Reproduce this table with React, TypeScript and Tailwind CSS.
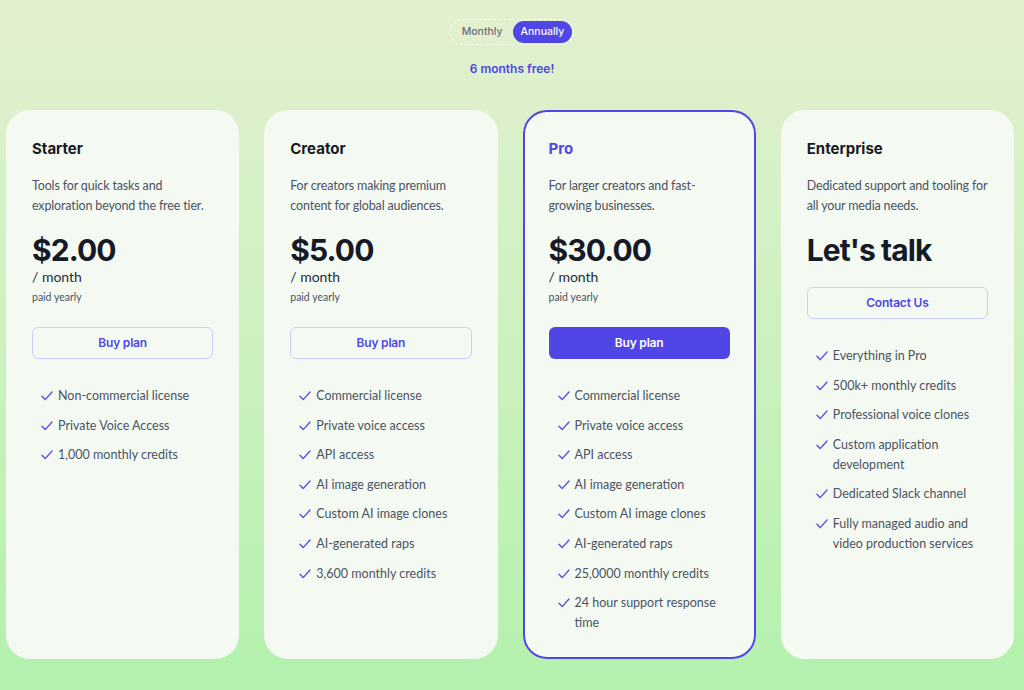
import { useState } from "react";

type Plan = {
  name: string;
  blurb: string;
  price?: string;
  cta: string;
  highlight?: boolean;
  features: string[];
};

const plans: Plan[] = [
  {
    name: "Starter",
    blurb: "Tools for quick tasks and exploration beyond the free tier.",
    price: "$2.00",
    cta: "Buy plan",
    features: ["Non-commercial license", "Private Voice Access", "1,000 monthly credits"],
  },
  {
    name: "Creator",
    blurb: "For creators making premium content for global audiences.",
    price: "$5.00",
    cta: "Buy plan",
    features: [
      "Commercial license",
      "Private voice access",
      "API access",
      "AI image generation",
      "Custom AI image clones",
      "AI-generated raps",
      "3,600 monthly credits",
    ],
  },
  {
    name: "Pro",
    blurb: "For larger creators and fast-growing businesses.",
    price: "$30.00",
    cta: "Buy plan",
    highlight: true,
    features: [
      "Commercial license",
      "Private voice access",
      "API access",
      "AI image generation",
      "Custom AI image clones",
      "AI-generated raps",
      "25,0000 monthly credits",
      "24 hour support response time",
    ],
  },
  {
    name: "Enterprise",
    blurb: "Dedicated support and tooling for all your media needs.",
    cta: "Contact Us",
    features: [
      "Everything in Pro",
      "500k+ monthly credits",
      "Professional voice clones",
      "Custom application development",
      "Dedicated Slack channel",
      "Fully managed audio and video production services",
    ],
  },
];

const heading = { fontFamily: "Inter, 'Noto Sans', sans-serif" };

function CheckMark() {
  return (
    <svg width="12" height="10" viewBox="0 0 12 10" fill="none" className="shrink-0 mt-[5px]">
      <path d="M1 5.2 4.2 8.6 11 1" stroke="#5b4fe6" strokeWidth="1.4" strokeLinecap="round" strokeLinejoin="round" />
    </svg>
  );
}

function PlanCard({ plan }: { plan: Plan }) {
  const outline = "border border-[#c9cffa] text-[#4f46e5] bg-transparent";
  return (
    <div
      className={`rounded-[24px] bg-[#f4faf2] px-[26px] pt-[29px] pb-[26px] ${
        plan.highlight ? "ring-2 ring-inset ring-[#5046e5]" : ""
      }`}
    >
      <h3
        style={heading}
        className={`text-[15px] leading-[20px] font-bold ${
          plan.highlight ? "text-[#4f46e5]" : "text-[#161a26]"
        }`}
      >
        {plan.name}
      </h3>
      <p className="mt-[17px] text-[12.5px] leading-[20px] tracking-[-0.15px] text-[#4b5262]">
        {plan.blurb}
      </p>

      <div
        style={heading}
        className="mt-[17px] text-[30px] leading-[34px] font-bold tracking-[-0.9px] text-[#161a26]"
      >
        {plan.price ?? "Let's talk"}
      </div>

      {plan.price ? (
        <>
          <div className="text-[14px] leading-[20px] text-[#262b38]">/ month</div>
          <div className="mt-[2px] text-[10.5px] leading-[16px] text-[#4b5262]">paid yearly</div>
          <button
            style={heading}
            className={`mt-[22px] h-[32px] w-full rounded-[6px] text-[12px] tracking-[-0.2px] font-semibold ${
              plan.highlight ? "bg-[#4f46e5] text-white" : outline
            }`}
          >
            {plan.cta}
          </button>
        </>
      ) : (
        <button
          style={heading}
          className={`mt-[20px] h-[32px] w-full rounded-[6px] text-[12px] tracking-[-0.2px] font-semibold ${outline}`}
        >
          {plan.cta}
        </button>
      )}

      <ul className="mt-[27px] flex flex-col gap-[9.6px]">
        {plan.features.map((f) => (
          <li key={f} className="flex gap-[5px] pl-[9px]">
            <CheckMark />
            <span className="text-[12.5px] leading-[20px] text-[#4b5262]">{f}</span>
          </li>
        ))}
      </ul>
    </div>
  );
}

export default function App() {
  const [billing, setBilling] = useState<"monthly" | "annually">("annually");

  return (
    <div
      className="min-h-[690px] w-full bg-gradient-to-b from-[#e3f0d0] to-[#b3f1ad]"
      style={{ fontFamily: "Lato, 'Noto Sans', sans-serif" }}
    >
      <div className="flex flex-col items-center pt-[19px]" style={heading}>
        <div className="flex items-center rounded-full border border-dashed border-white/70 p-[1px]">
          <button
            onClick={() => setBilling("monthly")}
            className={`h-[22px] rounded-full px-[10px] text-[10.5px] font-medium ${
              billing === "monthly" ? "bg-[#5046e5] text-white" : "text-[#6b6f78]"
            }`}
          >
            Monthly
          </button>
          <button
            onClick={() => setBilling("annually")}
            className={`h-[22px] rounded-full px-[8px] text-[10.5px] font-medium ${
              billing === "annually" ? "bg-[#5046e5] text-white" : "text-[#6b6f78]"
            }`}
          >
            Annually
          </button>
        </div>
        <p className="mt-[16px] text-[12px] leading-[16px] font-semibold text-[#5046e5]">6 months free!</p>
      </div>

      <div className="mt-[33px] grid grid-cols-4 gap-[25px] pl-[6px] pr-[10px] pb-[31px]">
        {plans.map((p) => (
          <PlanCard key={p.name} plan={p} />
        ))}
      </div>
    </div>
  );
}
